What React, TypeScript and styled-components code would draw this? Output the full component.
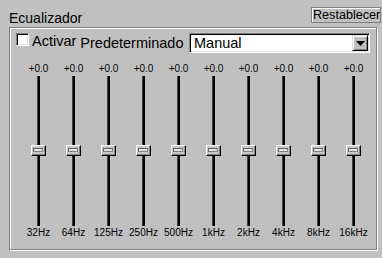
import React from "react";
import styled, { createGlobalStyle } from "styled-components";

const GlobalStyle = createGlobalStyle`
  html, body {
    margin: 0;
    padding: 0;
    background: #c0c0c0;
  }
  body {
    font-family: "Liberation Sans", Arial, sans-serif;
    color: #000;
  }
`;

const Window = styled.div`
  width: 382px;
  height: 258px;
  overflow: hidden;
  background: #c0c0c0;
  display: flex;
  flex-direction: column;
  box-sizing: border-box;
`;

const Header = styled.div`
  height: 27px;
  display: flex;
  justify-content: space-between;
  align-items: flex-start;
`;

const Title = styled.div`
  margin: 10px 0 0 9px;
  font-size: 14px;
  line-height: 16px;
`;

const ResetButton = styled.button`
  margin: 7px 1px 0 0;
  width: 70px;
  height: 16px;
  padding: 0 0 0 1px;
  box-sizing: border-box;
  overflow: hidden;
  white-space: nowrap;
  text-align: left;
  font-family: "Liberation Sans", Arial, sans-serif;
  font-size: 12.6px;
  line-height: 14px;
  color: #000;
  background: #c0c0c0;
  border: 1px solid #808080;
  box-shadow: inset 1px 1px 0 #ffffff;
`;

const Panel = styled.div`
  margin-left: 9px;
  width: 368px;
  height: 223px;
  box-sizing: border-box;
  border: 1px solid #808080;
  box-shadow: inset 1px 1px 0 #ffffff, 1px 1px 0 #ffffff;
  padding: 5px 6px 0 6px;
  display: flex;
  flex-direction: column;
`;

const ControlsRow = styled.div`
  height: 20px;
  display: flex;
  align-items: flex-start;
`;

const CheckLabel = styled.label`
  display: flex;
  align-items: flex-start;
  gap: 3px;
  font-size: 14.5px;
  line-height: 16px;
`;

const CheckBox = styled.span`
  width: 13px;
  height: 13px;
  box-sizing: border-box;
  background: #ffffff;
  border-top: 1px solid #808080;
  border-left: 1px solid #808080;
  border-right: 1px solid #ffffff;
  border-bottom: 1px solid #ffffff;
  box-shadow: inset 1px 1px 0 #000000, inset -1px -1px 0 #dfdfdf;
`;

const PresetLabel = styled.span`
  margin: 2px 0 0 4px;
  font-size: 14.5px;
  line-height: 16px;
`;

const Dropdown = styled.div`
  margin-left: auto;
  width: 181px;
  height: 20px;
  box-sizing: border-box;
  background: #ffffff;
  border-top: 1px solid #808080;
  border-left: 1px solid #808080;
  border-right: 1px solid #ffffff;
  border-bottom: 1px solid #ffffff;
  box-shadow: inset 1px 1px 0 #000000, inset -1px -1px 0 #dfdfdf;
  padding: 1px 1px 1px 4px;
  display: flex;
  align-items: center;
`;

const DropdownValue = styled.span`
  flex: 1;
  font-size: 14.5px;
  line-height: 16px;
`;

const ArrowButton = styled.span`
  width: 16px;
  height: 16px;
  box-sizing: border-box;
  background: #c0c0c0;
  border-top: 1px solid #dfdfdf;
  border-left: 1px solid #dfdfdf;
  border-right: 1px solid #000000;
  border-bottom: 1px solid #000000;
  box-shadow: inset 1px 1px 0 #ffffff, inset -1px -1px 0 #808080;
  display: flex;
  align-items: center;
  justify-content: center;
`;

const Sliders = styled.div`
  margin: 10px 0 0 5px;
  display: grid;
  grid-template-columns: repeat(10, 35px);
`;

const SliderColumn = styled.div`
  display: flex;
  flex-direction: column;
  align-items: center;
`;

const ValueLabel = styled.span`
  font-size: 10px;
  line-height: 12px;
  white-space: nowrap;
`;

const TrackArea = styled.div`
  position: relative;
  margin: 1px 0;
  width: 15px;
  height: 150px;
  display: flex;
  justify-content: center;
`;

const Track = styled.div`
  width: 3px;
  height: 100%;
  box-sizing: border-box;
  background: #000000;
  border-left: 1px solid #404040;
`;

const Thumb = styled.div`
  position: absolute;
  left: 0;
  top: 69px;
  width: 15px;
  height: 11px;
  box-sizing: border-box;
  background: #c8c8c8;
  border-top: 1px solid #ffffff;
  border-left: 1px solid #ffffff;
  border-right: 1px solid #000000;
  border-bottom: 1px solid #000000;
  box-shadow: inset -1px -1px 0 #808080;
  display: flex;
  align-items: center;
  justify-content: center;
`;

const Grip = styled.span`
  width: 10px;
  height: 4px;
  box-sizing: border-box;
  border-top: 1px solid #606060;
  border-left: 1px solid #606060;
  border-right: 1px solid #808080;
  border-bottom: 1px solid #808080;
  background: #e4e4e4;
  margin: 0 1px 1px 0;
`;

const bands = ["32Hz", "64Hz", "125Hz", "250Hz", "500Hz", "1kHz", "2kHz", "4kHz", "8kHz", "16kHz"];

export default function App() {
  return (
    <>
      <GlobalStyle />
      <Window>
        <Header>
          <Title>Ecualizador</Title>
          <ResetButton>Restablecer</ResetButton>
        </Header>
        <Panel>
          <ControlsRow>
            <CheckLabel>
              <CheckBox />
              Activar
            </CheckLabel>
            <PresetLabel>Predeterminado</PresetLabel>
            <Dropdown>
              <DropdownValue>Manual</DropdownValue>
              <ArrowButton>
                <svg width="9" height="5" viewBox="0 0 9 5">
                  <path d="M0 0H9L4.5 5Z" fill="#000" />
                </svg>
              </ArrowButton>
            </Dropdown>
          </ControlsRow>
          <Sliders>
            {bands.map((b) => (
              <SliderColumn key={b}>
                <ValueLabel>+0.0</ValueLabel>
                <TrackArea>
                  <Track />
                  <Thumb>
                    <Grip />
                  </Thumb>
                </TrackArea>
                <ValueLabel>{b}</ValueLabel>
              </SliderColumn>
            ))}
          </Sliders>
        </Panel>
      </Window>
    </>
  );
}
